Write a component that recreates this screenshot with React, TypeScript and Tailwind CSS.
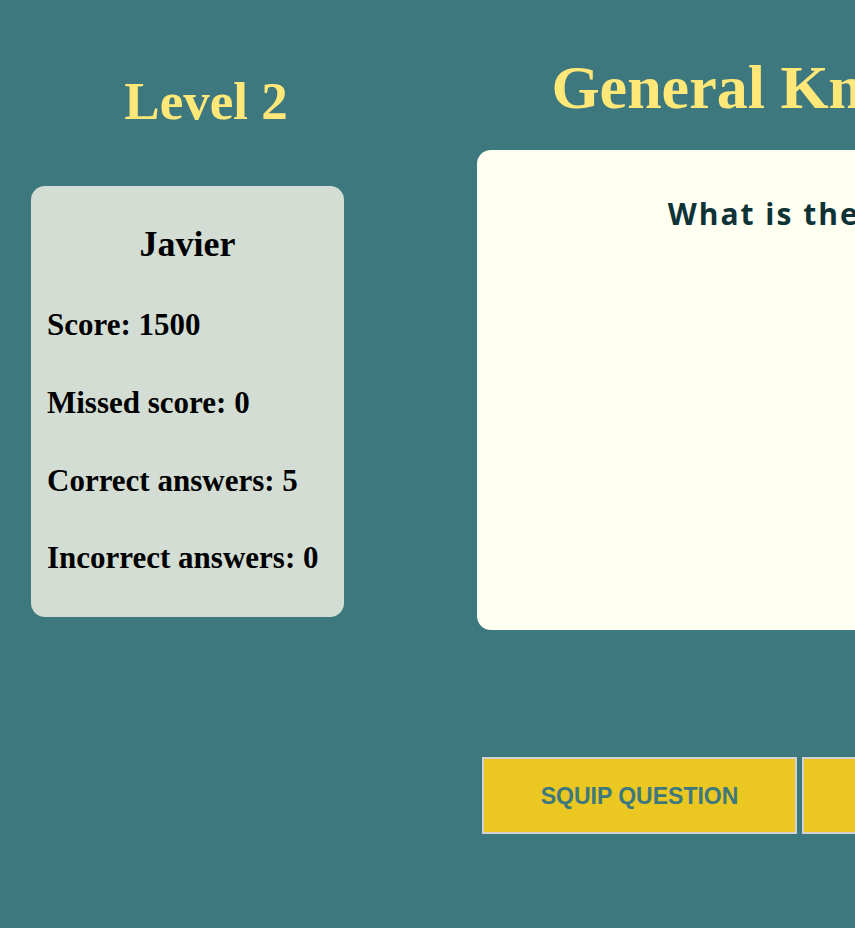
import React from "react";

interface Stat {
  label: string;
  value: number;
}

const stats: Stat[] = [
  { label: "Score", value: 1500 },
  { label: "Missed score", value: 0 },
  { label: "Correct answers", value: 5 },
  { label: "Incorrect answers", value: 0 },
];

const serif = "font-['Liberation_Serif','Times_New_Roman',serif]";

const PlayerCard: React.FC = () => (
  <div className="ml-[31px] mt-[54px] w-[313px] h-[431px] rounded-[14px] bg-[#d3ddd3] px-4 pt-[38px] text-black">
    <h2 className={`${serif} text-center text-[36px] font-bold leading-[1.15]`}>Javier</h2>
    <div className="mt-[42px] flex flex-col gap-[42px]">
      {stats.map((s) => (
        <p key={s.label} className={`${serif} text-[31px] font-bold leading-[1.15] whitespace-nowrap`}>
          {s.label}: {s.value}
        </p>
      ))}
    </div>
  </div>
);

export default function App() {
  return (
    <div className="h-screen w-full overflow-hidden bg-[#3d787e]">
      <div className="flex w-[1400px]">
        <div className="w-[412px] shrink-0 pt-[71px]">
          <h1 className={`${serif} text-center text-[53px] font-bold leading-[1.15] text-[#ffe778]`}>Level 2</h1>
          <PlayerCard />
        </div>

        <div className="ml-[65px] w-[674px] shrink-0 pt-[52px]">
          <h1 className={`${serif} text-center text-[62px] font-bold leading-[1.15] text-[#ffe778] whitespace-nowrap`}>
            General Knowledge
          </h1>
          <div className="mt-[27px] h-[480px] rounded-[14px] bg-[#fffff2] px-6 pt-[44px]">
            <p className="text-center font-['Open_Sans',sans-serif] text-[30px] font-bold leading-[1.362] tracking-[2px] text-[#0e3337] whitespace-nowrap">
              What is the year?
            </p>
          </div>
          <div className="ml-[5px] mt-[127px] flex gap-[5px]">
            <button className="h-[77px] w-[315px] shrink-0 border-2 border-[#d2d2d2] bg-[#ebc721] font-['Liberation_Sans',Arial,sans-serif] text-[23px] font-bold text-[#3d787e]">
              SQUIP QUESTION
            </button>
            <button className="h-[77px] w-[315px] shrink-0 border-2 border-[#d2d2d2] bg-[#ebc721] font-['Liberation_Sans',Arial,sans-serif] text-[23px] font-bold text-[#3d787e]">
              CHECK ANSWERS
            </button>
          </div>
        </div>
      </div>
    </div>
  );
}
